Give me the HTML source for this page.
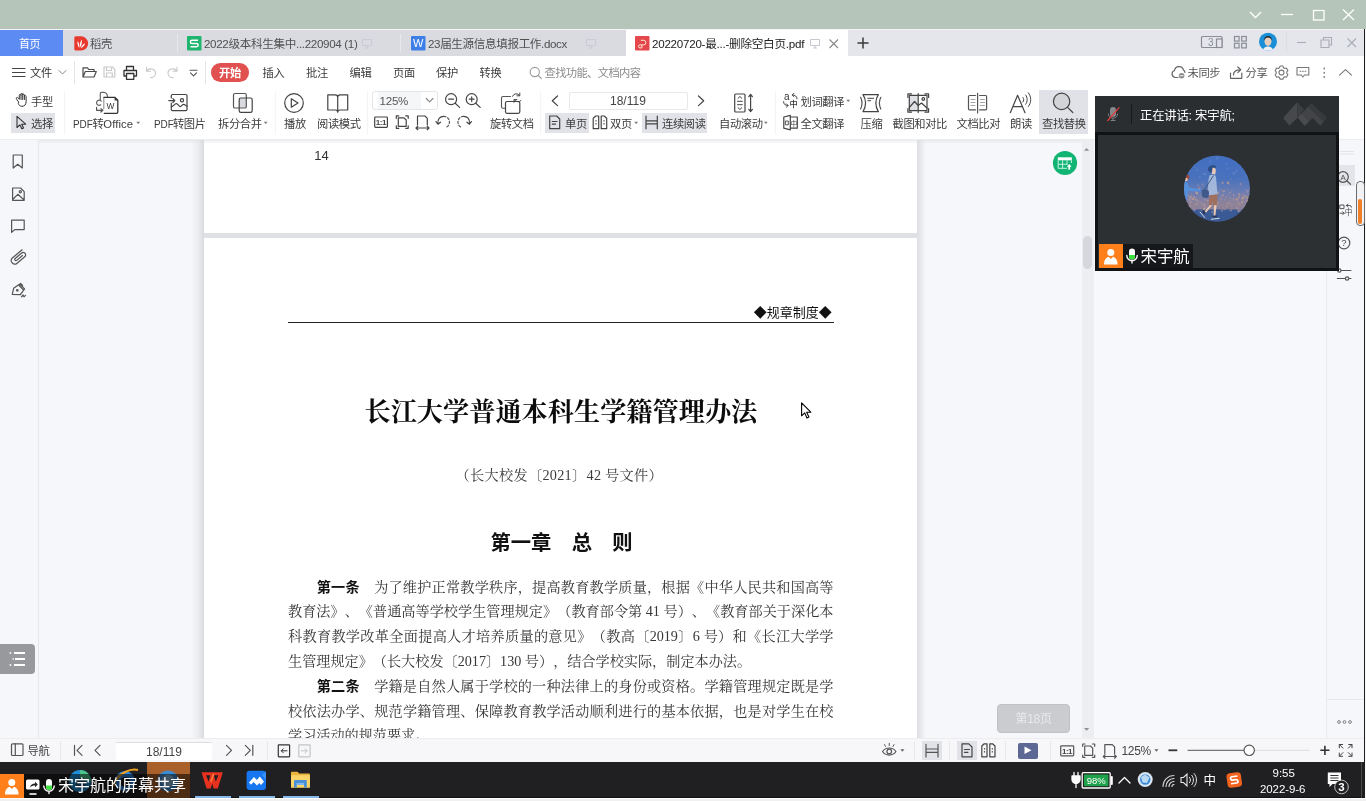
<!DOCTYPE html>
<html lang="zh-CN">
<head>
<meta charset="utf-8">
<title>20220720-最...-删除空白页.pdf</title>
<style>
*{box-sizing:border-box;margin:0;padding:0}
html,body{width:1366px;height:801px;overflow:hidden;background:#f0f0f0}
body{position:relative;font-family:"Liberation Sans","Noto Sans CJK SC",sans-serif;font-size:12px;color:#333;line-height:1}
.abs{position:absolute}
.t{position:absolute;white-space:nowrap;font-size:11.300px;line-height:14px;color:#3c3c3c;letter-spacing:-0.400px}
.t i{font-style:normal;display:inline-block;transform:scaleX(0.880);transform-origin:0 50%;margin-right:-2.900px;letter-spacing:-0.100px}
svg{position:absolute;overflow:visible}
.ic{fill:none;stroke:#555;stroke-width:1.2;stroke-linecap:round;stroke-linejoin:round}

/* ---------- frame ---------- */
#title{left:0;top:0;width:1366px;height:29px;background:#b5c5b9}
#tabs{left:0;top:29px;width:1366px;height:27px;background:#e4e6eb;border-top:1px solid #f3f4f6}
#menu{left:0;top:56px;width:1366px;height:32px;background:#fff}
#tool{left:0;top:88px;width:1366px;height:52px;background:#fff;border-bottom:1px solid #ebecef}
#content{left:0;top:140px;width:1366px;height:597.500px;background:#f6f7fa;overflow:hidden}
#status{left:0;top:737.500px;width:1366px;height:24.500px;background:#f7f7f9;border-top:1px solid #ededf0}
#task{left:0;top:762px;width:1366px;height:36px;background:#202022;border-bottom:1px solid #121213}
#foot{left:0;top:798px;width:1366px;height:3px;background:#f0f0f0;border-top:1px solid #fff}

#tabs,#menu,#tool,#content,#status,#task,#video{filter:blur(0.350px)}
/* ---------- content ---------- */
#side{left:0;top:0;width:39px;height:598px;background:#f6f7fa;border-right:1.500px solid #e6e7eb}
.page{position:absolute;left:204px;width:713px;background:#fff}
.shl{position:absolute;left:191px;width:13px;background:linear-gradient(to right,rgba(216,217,222,0),rgba(216,217,222,0.350) 55%,#d9dade)}
.shr{position:absolute;left:917px;width:9px;background:linear-gradient(to left,rgba(220,221,226,0),#dddee2)}
.doc{position:absolute;white-space:nowrap;text-spacing-trim:space-all;color:#2b2b2b;font-family:"Liberation Serif","Noto Serif CJK SC",serif}
.bl{text-spacing-trim:space-all;position:absolute;left:288px;width:545.500px;height:25px;line-height:25px;font-size:14.150px;white-space:nowrap;color:#363636;font-family:"Liberation Serif","Noto Serif CJK SC",serif;text-align:justify;text-align-last:justify}
.bl b{font-family:"Liberation Sans","Noto Sans CJK SC",sans-serif;font-weight:700;color:#111}
</style>
</head>
<body>

<div id="title" class="abs">
<svg width="1366" height="29" viewBox="0 0 1366 29" style="left:0;top:0">
<g fill="none" stroke="#fff" stroke-width="1.3">
<path d="M1250 12 L1255.5 17.5 L1261 12"/>
<path d="M1281 14.5 H1293"/>
<rect x="1313.5" y="10.5" width="10.5" height="9.5"/>
<path d="M1343 9.5 L1354 20 M1354 9.5 L1343 20"/>
</g>
</svg>
</div>
<div id="tabs" class="abs">
<div class="abs" style="left:0;top:0;width:848px;height:26px;background:#d9dbe1"></div>
<div class="abs" style="left:0;top:0;width:63px;height:26px;background:#5c8bf3"></div>
<div class="t" style="left:19px;top:6.800px;color:#fff;font-size:11px">首页</div>
<div class="abs" style="left:626px;top:0;width:222px;height:27px;background:#fff"></div>
<div class="abs" style="left:177px;top:4px;width:1px;height:18px;background:#e6e8ec"></div>
<div class="abs" style="left:400px;top:4px;width:1px;height:18px;background:#e6e8ec"></div>
<!-- docer icon -->
<svg width="14" height="15" viewBox="0 0 14 15" style="left:74px;top:6px">
<path d="M1.8 0.3 H7 A7 7 0 0 1 7 14.6 H1.8 A1.5 1.5 0 0 1 0.3 13.1 V1.8 A1.5 1.5 0 0 1 1.8 0.3Z" fill="#e8392f"/>
<path d="M5.300 12 C3.600 9.800 3.200 7.300 3.600 5 C5 6.800 5.700 9.300 5.300 12Z M6 11.600 C5.700 8.300 6.300 5.800 7.600 3.600 C8.300 6.300 7.800 9.300 6 11.600Z M6.800 12.200 C7.600 9.800 9 8.300 11 7.300 C10.600 9.600 9.200 11.300 6.800 12.200Z" fill="#fff"/>
</svg>
<div class="t" style="left:90px;top:6.800px;color:#505050">稻壳</div>
<!-- S icon -->
<svg width="15" height="15" viewBox="0 0 15 15" style="left:186.5px;top:6px">
<rect x="0" y="0" width="14.5" height="14.5" rx="1" fill="#1fb56f"/>
<path d="M11 4.3 H5 A1.6 1.6 0 0 0 5 7.5 H9.6 A1.6 1.6 0 0 1 9.6 10.7 H3.5" fill="none" stroke="#fff" stroke-width="1.4"/>
</svg>
<div class="t" style="left:204px;top:6.800px;color:#505050;font-size:11.600px;letter-spacing:-0.330px">2022级本科生集中...220904 (1)</div>
<svg width="10" height="10" viewBox="0 0 10 10" style="left:362px;top:9px"><path d="M0.5 0.5 H9.5 V6.5 H0.5Z M3 9 H7 M5 6.5 V9" fill="none" stroke="#c9ccd3" stroke-width="1"/></svg>
<!-- W icon -->
<svg width="15" height="15" viewBox="0 0 15 15" style="left:410.5px;top:6px">
<rect x="0" y="0" width="14.5" height="14.5" rx="1" fill="#3d7fe6"/>
<text x="7.250" y="11.300" font-size="11" font-weight="400" text-anchor="middle" fill="#fff" font-family="Liberation Sans, sans-serif">W</text>
</svg>
<div class="t" style="left:428px;top:6.800px;color:#505050;font-size:11.600px;letter-spacing:-0.380px">23届生源信息填报工作.docx</div>
<svg width="10" height="10" viewBox="0 0 10 10" style="left:586px;top:9px"><path d="M0.5 0.5 H9.5 V6.5 H0.5Z M3 9 H7 M5 6.5 V9" fill="none" stroke="#c9ccd3" stroke-width="1"/></svg>
<!-- P icon -->
<svg width="15" height="15" viewBox="0 0 15 15" style="left:634.5px;top:6px">
<rect x="0" y="0" width="14.5" height="14.5" rx="1" fill="#e4474c"/>
<path d="M5.800 4.300 H8.600 A2.300 2.300 0 0 1 8.600 8.900 H5 A1.500 1.500 0 0 0 5 11.900 H6.900 V8.900" fill="none" stroke="#ffe9d0" stroke-width="1"/>
</svg>
<div class="t" style="left:652px;top:6.800px;color:#222;font-size:11.6px;letter-spacing:-0.25px">20220720-最...-删除空白页.pdf</div>
<svg width="10" height="10" viewBox="0 0 10 10" style="left:810px;top:9px"><path d="M0.5 0.5 H9.5 V6.5 H0.5Z M3 9 H7 M5 6.5 V9" fill="none" stroke="#c4c7ce" stroke-width="1"/></svg>
<svg width="10" height="10" viewBox="0 0 10 10" style="left:829px;top:9px"><path d="M0.5 0.5 L9 9 M9 0.5 L0.5 9" fill="none" stroke="#888" stroke-width="1.1"/></svg>
<svg width="12" height="12" viewBox="0 0 12 12" style="left:857px;top:7px"><path d="M6 0.5 V11.5 M0.5 6 H11.5" fill="none" stroke="#3a3a3a" stroke-width="1.5"/></svg>
<!-- right icons -->
<svg width="170" height="27" viewBox="1196 29 170 27" style="left:1196px;top:-1px">
<g fill="none" stroke="#8a8d94" stroke-width="1.2">
<rect x="1201.5" y="36.5" width="20.5" height="11" rx="1"/>
<rect x="1216.5" y="39" width="5.5" height="8.5" fill="#e5e7ec"/>
<rect x="1234.5" y="36.500" width="4.6" height="4.6"/><rect x="1241.700" y="36.500" width="4.6" height="4.6"/>
<rect x="1234.5" y="43.300" width="4.6" height="4.6"/><rect x="1241.700" y="43.300" width="4.6" height="4.6"/>
</g>
<text x="1208" y="46" font-size="10" fill="#8a8d94" font-family="Liberation Sans, sans-serif">3</text>
<defs><clipPath id="uav"><circle cx="1268" cy="41.700" r="9"/></clipPath></defs>
<circle cx="1268" cy="41.700" r="9" fill="#1a8fd8"/>
<g clip-path="url(#uav)">
<path d="M1262.500 52 C1263 47.500 1265.500 46.500 1268 46.500 C1270.500 46.500 1273 47.500 1273.500 52 Z" fill="#eef0f3"/>
<ellipse cx="1268" cy="41.300" rx="3.500" ry="4.700" fill="#e6cdbd"/>
<path d="M1264.200 40.500 C1263.300 34.500 1272.700 34.500 1271.800 40.500 C1271 38.300 1269.500 37.600 1268 37.600 C1266.500 37.600 1265 38.300 1264.200 40.500 Z" fill="#26282c"/>
</g>
<path d="M1286.500 32 V52" stroke="#dcdee3" stroke-width="1"/>
<g fill="none" stroke="#a9acb3" stroke-width="1.1">
<path d="M1297 42.500 H1306"/>
<path d="M1321 40 H1329 V47.500 H1321Z M1323.500 40 V37.500 H1331.500 V45 H1329"/>
<path d="M1347.500 38.500 L1356 47 M1356 38.500 L1347.500 47"/>
</g>
</svg>
</div>
<div id="menu" class="abs">
<svg width="1366" height="32" viewBox="0 56 1366 32" style="left:0;top:0">
<g class="ic" stroke="#555" stroke-width="1.2">
<path d="M12.500 68.500 H25 M12.500 72.500 H25 M12.500 76.500 H25" stroke="#444"/>
<path d="M59 70.500 L62.500 74 L66 70.500" stroke="#888" stroke-width="1"/>
<path d="M74.500 61.500 V84" stroke="#e4e5e8" stroke-width="1"/>
<!-- folder -->
<path d="M83 77 V67.800 H87.500 L88.800 69.500 H94 V71.500 M83 77 L85.300 71.500 H96.300 L94 77 Z" stroke="#4a4a4a"/>
<!-- save -->
<path d="M104 67 H112.500 L114.800 69.300 V77 H104 Z M106.500 67 V70.500 H111.500 V67 M106.500 77 V73 H112.300 V77" stroke="#c9cacc"/>
<!-- print -->
<path d="M126.500 70.500 V66.500 H133.500 V70.500 M126.500 76 H124 V70.500 H136.500 V76 H133.800 M126.500 73.500 H133.800 V79.300 H126.500 Z" stroke="#333" stroke-width="1.300"/>
<!-- undo -->
<path d="M146.500 67.300 V71.300 H150.500 M146.800 71 C149 67.500 155.500 68.500 155.500 73 C155.500 76 153 77.800 150.300 77.800" stroke="#c6c7ca" stroke-width="1.100"/>
<!-- redo -->
<path d="M177 67.300 V71.300 H173 M176.700 71 C174.500 67.500 168 68.500 168 73 C168 76 170.500 77.800 173.200 77.800" stroke="#c6c7ca" stroke-width="1.100"/>
<!-- more -->
<path d="M190 70.200 H197 M190.500 72.800 L193.500 75.800 L196.500 72.800" stroke="#555" stroke-width="1.1"/>
<path d="M205.500 61.500 V84" stroke="#e4e5e8" stroke-width="1"/>
<!-- search -->
<circle cx="534.800" cy="72" r="4.600" stroke="#9a9a9a" stroke-width="1.100"/><path d="M538.200 75.500 L541.500 78.600" stroke="#9a9a9a" stroke-width="1.100"/>
<!-- cloud -->
<path d="M1178 77.500 H1175.500 A3.600 3.600 0 0 1 1174.500 70.500 A4.600 4.600 0 0 1 1183.500 70 A3.400 3.400 0 0 1 1185 72.500" stroke="#666"/>
<circle cx="1181.600" cy="75.700" r="2.800" fill="#8c8c8c" stroke="none"/>
<path d="M1180.200 75.700 H1183" stroke="#fff" stroke-width="0.900"/>
<!-- share -->
<path d="M1230.500 73 V78.300 H1241.800 V73 M1233.500 75 C1233.500 71.500 1236 69.800 1240 69.800 M1237.800 67 L1240.800 69.800 L1237.800 72.600" stroke="#666"/>
<!-- gear -->
<path d="M1279.99 66.07 L1283.01 66.07 L1283.49 67.69 L1284.76 68.42 L1286.40 68.03 L1287.91 70.64 L1286.75 71.86 L1286.75 73.34 L1287.91 74.56 L1286.40 77.17 L1284.76 76.78 L1283.49 77.51 L1283.01 79.13 L1279.99 79.13 L1279.51 77.51 L1278.24 76.78 L1276.60 77.17 L1275.09 74.56 L1276.25 73.34 L1276.25 71.86 L1275.09 70.64 L1276.60 68.03 L1278.24 68.42 L1279.51 67.69 Z" stroke="#777" stroke-width="1.100"/>
<circle cx="1281.500" cy="72.600" r="2.500" stroke="#777" stroke-width="1.100"/>
<!-- chat -->
<path d="M1297 67.500 H1308.800 V75 H1304.500 L1302.900 77 L1301.300 75 H1297 Z" stroke="#777" stroke-width="1.100"/>
<path d="M1300 71.300 h0.800 M1302.500 71.300 h0.800 M1305 71.300 h0.800" stroke="#777" stroke-width="1.100"/>
<!-- dots -->
<path d="M1324.200 68.200 v0.600 M1324.200 72.400 v0.600 M1324.200 76.600 v0.600" stroke="#666" stroke-width="1.400"/>
<!-- chevron up -->
<path d="M1339.500 75.200 L1345.500 69.600 L1351.500 75.200" stroke="#777" stroke-width="1.100"/>
</g>
</svg>
<div class="t" style="left:30px;top:9.5px;color:#333">文件</div>
<div class="abs" style="left:211px;top:7px;width:38px;height:18.500px;border-radius:9.250px;background:#e0514f"></div>
<div class="t" style="left:219px;top:9.500px;color:#fff;font-weight:700">开始</div>
<div class="t" style="left:262.500px;top:9.500px">插入</div>
<div class="t" style="left:306px;top:9.500px">批注</div>
<div class="t" style="left:349.500px;top:9.500px">编辑</div>
<div class="t" style="left:393px;top:9.500px">页面</div>
<div class="t" style="left:436px;top:9.500px">保护</div>
<div class="t" style="left:479.500px;top:9.500px">转换</div>
<div class="t" style="left:544.500px;top:9.500px;color:#8b8b8b;letter-spacing:-0.650px">查找功能、文档内容</div>
<div class="t" style="left:1187.500px;top:9.500px;color:#555">未同步</div>
<div class="t" style="left:1245.500px;top:9.500px;color:#555">分享</div>
</div>
<div id="tool" class="abs">
<div class="abs" style="left:11px;top:24.500px;width:44px;height:20px;background:#e1e3e8"></div>
<div class="abs" style="left:545px;top:24.500px;width:44px;height:20px;background:#e1e3e8"></div>
<div class="abs" style="left:642px;top:24.500px;width:65px;height:20px;background:#e1e3e8"></div>
<div class="abs" style="left:1039px;top:2px;width:49px;height:44px;background:#e0e2e7"></div>
<div class="abs" style="left:372px;top:2.500px;width:65.500px;height:19px;border:1px solid #e3e5ea;border-radius:3px;background:#fff"></div>
<div class="abs" style="left:378px;top:3.500px;width:43px;height:17px;background:#f5f6f8"></div>
<div class="abs" style="left:568.500px;top:3.500px;width:119px;height:18.500px;border:1px solid #e6e8ec;border-radius:2px;background:#fff"></div>
<svg width="1366" height="52" viewBox="0 88 1366 52" style="left:0;top:0">
<g class="ic" stroke="#555" stroke-width="1.100">
<!-- hand -->
<path d="M18.500 101.800 L16.600 99.200 C15.600 97.800 17.300 96.700 18.300 98 L19.300 99.300 V95.300 C19.300 94 21 94 21 95.300 V94.300 C21 93 22.700 93 22.700 94.300 V95 C22.700 93.800 24.400 93.800 24.400 95.100 V96.300 C24.400 95.200 26.100 95.200 26.100 96.500 V101.800 C26.100 104.800 24.300 106.300 22 106.300 C20 106.300 19.200 105.300 18.500 104 Z M21 95.300 V99.500 M22.700 95 V99.500 M24.400 96.300 V99.500" stroke="#333" stroke-width="1"/>
<!-- cursor -->
<path d="M17 116.300 V127.500 L19.900 124.800 L21.800 128.800 L23.600 128 L21.700 124.200 H25.700 Z" stroke="#333" stroke-width="1.100"/>
<path d="M64.500 92 V134" stroke="#f3f4f6"/>
<!-- pdf to office -->
<path d="M100.300 100.300 V93.400 Q100.300 92.300 101.400 92.300 H103.800 Q107.300 92.600 107.500 96.800" stroke="#666"/>
<path d="M103.800 97.300 V108.800" stroke="#999"/>
<path d="M104 97.300 H114.800 L117.800 100.300 V112 Q117.800 113.300 116.500 113.300 H104.300" stroke="#333" stroke-width="1.300"/>
<path d="M114.600 97.300 L117.800 100.500 H114.600 Z" fill="#333" stroke="none"/>
<text x="110.500" y="108.700" font-size="8.400" text-anchor="middle" fill="#333" font-family="Liberation Sans, Noto Sans CJK SC, sans-serif" stroke="none">W</text>
<path d="M101.200 101.200 A2.600 2.600 0 1 0 100.800 104.800" stroke="#666"/>
<path d="M96.600 107.300 V110.300 H102.600 M100.900 108.600 L102.800 110.300 L100.900 112" stroke="#555"/>
<!-- pdf to image -->
<path d="M171.300 98 V95.700 Q171.300 94.500 172.500 94.500 H185.800 Q187 94.500 187 95.700 V109.400 Q187 110.600 185.800 110.600 H172.500 Q171.300 110.600 171.300 109.400 V103.200" stroke="#444"/>
<path d="M168.800 100.600 H174.800 M172.900 98.700 L174.800 100.600 L172.900 102.500" stroke="#444"/>
<circle cx="182" cy="100.200" r="1.600" stroke="#444"/>
<path d="M171.500 106.800 C173.500 106.500 174.500 103.600 176.300 103.600 C178 103.600 178.800 106.600 180.300 106.600 C181.600 106.600 182.300 104.300 183.600 104.300 C185 104.300 185.800 105.800 187 106.300" stroke="#444"/>
<!-- split/merge -->
<rect x="239.500" y="98.300" width="6.500" height="9.300" fill="#d9dadf" stroke="none"/>
<rect x="233.500" y="93.500" width="12.800" height="14.500" rx="1.600" stroke="#555"/>
<rect x="239.200" y="98" width="13" height="14.300" rx="1.600" stroke="#444"/>
<path d="M275.500 92 V134" stroke="#f3f4f6"/>
<!-- play -->
<circle cx="294" cy="103" r="9.300" stroke="#444" stroke-width="1.200"/>
<path d="M291.300 98.800 L298 103 L291.300 107.200 Z" stroke="#444"/>
<!-- read mode -->
<path d="M337.700 97.300 Q337.700 94.800 335.200 94.800 H327.800 V110 H335.500 Q337.700 110 337.700 112.200 Q337.700 110 339.900 110 H347.700 V94.800 H340.200 Q337.700 94.800 337.700 97.300 V112" stroke="#444" stroke-width="1.200"/>
<path d="M367.500 92 V134" stroke="#f3f4f6"/>
<!-- chevron zoom -->
<path d="M426.300 98.500 L429.600 101.800 L432.900 98.500" stroke="#888"/>
<!-- zoom out/in -->
<circle cx="451.100" cy="99.200" r="5.500" stroke="#444" stroke-width="1.200"/><path d="M455.200 103.300 L459.600 107.400 M448.700 99.200 H453.500" stroke="#444" stroke-width="1.200"/>
<circle cx="471.700" cy="99.200" r="5.500" stroke="#444" stroke-width="1.200"/><path d="M475.800 103.300 L480.200 107.400 M469.300 99.200 H474.100 M471.700 96.800 V101.600" stroke="#444" stroke-width="1.200"/>
<!-- 1:1 -->
<rect x="374.700" y="117" width="12.700" height="10.300" rx="0.800" stroke="#444"/>
<text x="380.900" y="125.200" font-size="8" font-weight="700" letter-spacing="-0.500" text-anchor="middle" fill="#444" font-family="Liberation Sans, Noto Sans CJK SC, sans-serif" stroke="none">1:1</text>
<!-- fit page -->
<path d="M396.300 118.300 V115.800 H398.800 M405.700 115.800 H408.200 V118.300 M408.200 125.800 V128.300 H405.700 M398.800 128.300 H396.300 V125.800" stroke="#444"/>
<path d="M398.300 117.800 H404 L406.200 120 V126.300 H398.300 Z" stroke="#444"/>
<!-- fit width -->
<path d="M417.500 125 V116 H425 L427.300 118.300 V125" stroke="#444"/>
<path d="M416 128 H429 M417.800 126.300 L416 128 L417.800 129.700 M427.200 126.300 L429 128 L427.200 129.700" stroke="#444"/>
<!-- rotate ccw -->
<path d="M438 123.500 C437.500 119 440 116.300 443.800 116.300" stroke="#444"/>
<path d="M443.800 116.300 A5.800 5.800 0 0 1 445.500 127.600" stroke="#555" stroke-dasharray="2.200 1.800"/>
<path d="M436 121.600 L438 124.200 L440.500 122.200" stroke="#444"/>
<!-- rotate cw -->
<path d="M469.400 123.500 C469.900 119 467.400 116.300 463.600 116.300" stroke="#444"/>
<path d="M463.600 116.300 A5.800 5.800 0 0 0 461.900 127.600" stroke="#555" stroke-dasharray="2.200 1.800"/>
<path d="M471.400 121.600 L469.400 124.200 L466.900 122.200" stroke="#444"/>
<!-- rotate doc -->
<path d="M505.500 108.300 H503 A1.500 1.500 0 0 1 501.500 106.800 V98 A1.500 1.500 0 0 1 503 96.500 H510.500" stroke="#555" stroke-width="1.100"/>
<rect x="505.500" y="101.500" width="14.300" height="11.800" rx="1.500" stroke="#444" stroke-width="1.200"/>
<path d="M512.500 96.300 A4 4 0 0 1 519.500 95.500 M519.800 93 V95.800 H517 M521 100.500 A4 4 0 0 1 514.500 100 M514 102.300 V99.600 H516.800" stroke="#444" stroke-width="1"/>
<path d="M540.500 92 V134" stroke="#f3f4f6"/>
<!-- prev / next -->
<path d="M557.500 96 L552.300 100.800 L557.500 105.600" stroke="#444" stroke-width="1.200"/>
<path d="M698.500 96 L703.700 100.800 L698.500 105.600" stroke="#444" stroke-width="1.200"/>
<!-- single page -->
<path d="M549.700 116 H556.700 L559.700 119 V128.700 H549.700 Z M552.300 121.500 H557 M552.300 124.200 H555.500" stroke="#444"/>
<!-- double page -->
<path d="M593.200 118.200 L595.700 116 H598.700 V128.700 H593.200 Z M601.200 116 H604.200 L606.700 118.200 V128.700 H601.200 Z M596 120.500 v0.400 M596 123.500 v0.400 M604 120.500 v0.400 M604 123.500 v0.400" stroke="#444"/>
<!-- continuous -->
<path d="M646 116 V128.800 M657.300 116 V128.800 M646 120.800 H657.300 M646 123.800 H657.300" stroke="#444" stroke-width="1.200"/>
<!-- auto scroll -->
<rect x="734.700" y="94" width="10.300" height="18" rx="1" stroke="#444"/>
<path d="M738 98.300 L739.900 96.500 L741.800 98.300 M738 107.700 L739.900 109.500 L741.800 107.700 M737.500 101.300 H742.300 M737.500 104.700 H742.300" stroke="#444" stroke-width="1"/>
<path d="M750.600 94.600 V111.400 M748.800 96.600 L750.600 94.400 L752.400 96.600 M748.800 109.400 L750.600 111.600 L752.400 109.400" stroke="#444"/>
<path d="M775.500 92 V134" stroke="#f3f4f6"/>
<!-- word translate -->
<text x="786.700" y="99.800" font-size="10" text-anchor="middle" fill="#333" font-family="Liberation Sans, Noto Sans CJK SC, sans-serif" stroke="none">a</text>
<path d="M797 98.800 C797 96.300 795.300 95 792.300 95 M793.900 93.300 L792.200 95 L793.900 96.700" stroke="#444" stroke-width="1"/>
<path d="M783.600 101.600 C783.600 104.300 785 105.500 788 105.500 M786.400 103.800 L788.100 105.500 L786.400 107.200" stroke="#444" stroke-width="1"/>
<text x="793.500" y="107.300" font-size="8.200" font-weight="500" text-anchor="middle" fill="#333" font-family="Liberation Sans, Noto Sans CJK SC, sans-serif" stroke="none">中</text>
<!-- full translate -->
<path d="M790.300 115.400 L783.800 117 V128.200 L790.300 129.800 Z M790.300 117 H797.300 V128.200 H790.300" stroke="#444"/>
<path d="M785.800 121 H788.300 V124.800 H785.800 Z" stroke="#444" stroke-width="0.900"/>
<text x="793.900" y="125.600" font-size="6.800" text-anchor="middle" fill="#444" font-family="Liberation Sans, Noto Sans CJK SC, sans-serif" stroke="none">中</text>
<!-- compress -->
<path d="M863 94.600 H878.400 C875 99.500 875 106.700 878.400 111.700 H863 C866.400 106.700 866.400 99.500 863 94.600 Z" stroke="#444" stroke-width="1.200"/>
<path d="M867.800 98.300 H873.600 M867.800 100.700 H870.600" stroke="#444" stroke-width="1"/>
<path d="M860.600 97.300 C862.400 101 862.400 105.300 860.600 109 M880.800 97.300 C879 101 879 105.300 880.800 109" stroke="#555"/>
<!-- screenshot compare -->
<rect x="909.300" y="95.300" width="8.900" height="15.400" fill="#dfe0e4" stroke="none"/>
<path d="M907.900 97.500 V93.900 H911.500 M925 93.900 H928.600 V97.500 M928.600 108.600 V112.200 H925 M911.500 112.200 H907.900 V108.600" stroke="#444" stroke-width="1.200"/>
<path d="M909.300 95.300 H927 V110.700 H909.300 Z M918.200 93.500 V112.600" stroke="#444"/>
<path d="M909.300 107.500 L914.500 101.500 L918.200 105.500 L921.500 103 L927 108" stroke="#444"/>
<circle cx="923.300" cy="99" r="1.300" stroke="#444"/>
<!-- doc compare -->
<path d="M977.600 93.300 V113 M975.600 95.500 H969.500 A1 1 0 0 0 968.500 96.500 V108.800 A1 1 0 0 0 969.500 109.800 H975.600 M979.600 95.500 H985.600 A1 1 0 0 1 986.600 96.500 V108.800 A1 1 0 0 1 985.600 109.800 H979.600" stroke="#555"/>
<path d="M971 99.500 H975 M971 102.500 H975 M971 105.500 H975 M980.500 99.500 H984.500 M980.500 102.500 H984.500 M980.500 105.500 H984.500" stroke="#999" stroke-width="0.900"/>
<!-- read aloud -->
<path d="M1010.300 112.700 L1017.600 95.300 L1025 112.700 M1012.800 106.600 H1022.400" stroke="#444" stroke-width="1.200"/>
<path d="M1023 97.500 C1024 98.800 1024 100.500 1023 102 M1025.700 95 C1027.700 97.500 1027.700 101.800 1025.700 104.300 M1028.400 92.800 C1031.500 96.500 1031.500 102.800 1028.400 106.500" stroke="#444" stroke-width="1"/>
<!-- find replace -->
<circle cx="1061.600" cy="101.400" r="8.200" stroke="#444" stroke-width="1.200" fill="#d3d4d8"/>
<path d="M1067.600 107.400 L1072.800 112.500" stroke="#444" stroke-width="1.200"/>
</g>
<g fill="#777">
<path d="M136.300 121.800 h3.800 l-1.900 2.300z M263.800 121.800 h3.800 l-1.900 2.300z M634.300 121.800 h3.800 l-1.900 2.300z M764 121.800 h3.800 l-1.900 2.300z M846.300 99.800 h3.800 l-1.900 2.300z"/>
</g>
</svg>
<div class="t" style="left:31px;top:6.500px">手型</div>
<div class="t" style="left:31px;top:28.500px">选择</div>
<div class="t" style="left:73px;top:29px"><i>PDF</i>转<span style="letter-spacing:0.100px">Office</span></div>
<div class="t" style="left:153.500px;top:29px"><i>PDF</i>转图片</div>
<div class="t" style="left:218px;top:29px">拆分合并</div>
<div class="t" style="left:284px;top:29px">播放</div>
<div class="t" style="left:317px;top:29px">阅读模式</div>
<div class="t" style="left:379.500px;top:5.500px;font-size:11.500px;color:#555;letter-spacing:-0.200px">125%</div>
<div class="t" style="left:490px;top:29px">旋转文档</div>
<div class="t" style="left:610px;top:6px;font-size:12px;color:#444;letter-spacing:0">18/119</div>
<div class="t" style="left:565px;top:28.500px">单页</div>
<div class="t" style="left:610px;top:28.500px">双页</div>
<div class="t" style="left:662px;top:28.500px">连续阅读</div>
<div class="t" style="left:719px;top:29px">自动滚动</div>
<div class="t" style="left:800.500px;top:6.500px">划词翻译</div>
<div class="t" style="left:800.500px;top:28.500px">全文翻译</div>
<div class="t" style="left:860.500px;top:29px">压缩</div>
<div class="t" style="left:892.500px;top:29px">截图和对比</div>
<div class="t" style="left:956.500px;top:29px">文档比对</div>
<div class="t" style="left:1010px;top:29px">朗读</div>
<div class="t" style="left:1042px;top:29px">查找替换</div>
</div>
<div id="content" class="abs">
<div class="abs" style="left:0;top:0;width:1366px;height:4px;background:linear-gradient(to bottom,#e9eaed,rgba(246,247,250,0))"></div>
<div id="side" class="abs"></div>
<svg width="40" height="160" viewBox="0 145 40 160" style="left:0;top:5px">
<g class="ic" stroke="#444" stroke-width="1.200">
<path d="M13.200 155 H22.300 V168 L17.750 164.300 L13.200 168 Z"/>
<path d="M12.600 188 H20.500 L24.200 191.700 V200.300 H12.600 Z M12.600 199.500 L17.800 194.300 L24.200 200"/>
<circle cx="20.300" cy="191.800" r="1.100"/>
<path d="M11.600 220.200 H24.200 V229.600 H14.800 L11.600 232.300 Z"/>
<g transform="translate(18.300 257.600) rotate(-40) translate(-8.500 -4)"><path d="M16.500 0.500 H4 A3.500 3.500 0 0 0 4 7.500 H14 A2.400 2.400 0 0 0 14 2.700 H5.500 A1.200 1.200 0 0 0 5.500 5.100 H13"/></g>
<path d="M12.300 294.500 L13.600 288.300 L19.800 284 L24.600 288.800 L20.300 294.600 L12.300 294.500 M18.600 285 L23.600 290 M20.600 283.300 L22.600 285.300"/>
<circle cx="17.300" cy="290.300" r="0.800"/>
<path d="M21.500 296.800 L23 295 L24 296.800 L25.500 295.300"/>
</g>
</svg>
<!-- pages -->
<div class="shl" style="top:0;height:598px"></div>
<div class="shr" style="top:0;height:598px"></div>
<div class="abs" style="left:204px;top:92px;width:713px;height:7px;background:#dfe0e3"></div>
<div class="page" style="top:0;height:92.600px"></div>
<div class="page" style="top:98px;height:500px"></div>
<div class="abs" style="left:204px;top:0;width:713px;height:4px;background:linear-gradient(to bottom,#ebecee,rgba(255,255,255,0))"></div>
<div class="doc" style="left:314.300px;top:7.700px;font-size:13px;line-height:16px;font-family:'Liberation Sans',sans-serif;color:#333">14</div>
<div class="doc" style="left:753.700px;top:163.200px;font-size:13px;line-height:18px;font-family:'Liberation Sans','Noto Sans CJK SC',sans-serif;color:#111"><span style="font-family:'Noto Sans CJK SC',sans-serif">◆</span>规章制度<span style="font-family:'Noto Sans CJK SC',sans-serif">◆</span></div>
<div class="abs" style="left:288px;top:181.700px;width:546px;height:1.200px;background:#222"></div>
<div class="doc" style="left:364.500px;top:254.600px;font-size:26.200px;line-height:36px;font-weight:700;color:#0c0c0c">长江大学普通本科生学籍管理办法</div>
<div class="doc" style="left:455.500px;top:324.500px;font-size:14.200px;letter-spacing:0.300px;line-height:20px;color:#3a3a3a">（长大校发〔2021〕42 号文件）</div>
<div class="doc" style="left:490.500px;top:387.700px;font-size:20.300px;line-height:30px;font-weight:700;font-family:'Liberation Sans','Noto Sans CJK SC',sans-serif;color:#111">第一章　总　则</div>
<div class="bl" style="top:434.500px;left:316.700px;width:516.800px"><b>第一条</b>　为了维护正常教学秩序，提高教育教学质量，根据《中华人民共和国高等</div>
<div class="bl" style="top:459.300px">教育法》、《普通高等学校学生管理规定》（教育部令第 41 号）、《教育部关于深化本</div>
<div class="bl" style="top:484.100px">科教育教学改革全面提高人才培养质量的意见》（教高〔2019〕6 号）和《长江大学学</div>
<div class="bl" style="top:508.900px;text-align-last:left">生管理规定》（长大校发〔2017〕130 号），结合学校实际，制定本办法。</div>
<div class="bl" style="top:533.700px;left:316.700px;width:516.800px"><b>第二条</b>　学籍是自然人属于学校的一种法律上的身份或资格。学籍管理规定既是学</div>
<div class="bl" style="top:558.500px">校依法办学、规范学籍管理、保障教育教学活动顺利进行的基本依据，也是对学生在校</div>
<div class="bl" style="top:583.300px;text-align-last:left">学习活动的规范要求。</div>
<!-- mouse cursor -->
<svg width="12" height="18" viewBox="0 0 12 18" style="left:801px;top:261.500px"><path d="M0.600 0.800 V13.800 L3.700 10.900 L5.900 16 L7.900 15.100 L5.700 10.200 H9.800 Z" fill="#fff" stroke="#000" stroke-width="1.100" stroke-linejoin="round"/></svg>
<!-- scrollbar -->
<div class="abs" style="left:1081.500px;top:0;width:12.500px;height:598px;background:#edeef2"></div>
<div class="abs" style="left:1082.500px;top:96px;width:9px;height:33px;border-radius:4.500px;background:#d5d7dc"></div>
<svg width="6" height="4" viewBox="0 0 6 4" style="left:1084px;top:8.200px"><path d="M0 2.800 L2.600 0 L5.200 2.800Z" fill="#8e9096"/></svg>
<svg width="6" height="4" viewBox="0 0 6 4" style="left:1084px;top:587.800px"><path d="M0 0 L2.600 2.800 L5.200 0Z" fill="#8e9096"/></svg>
<!-- right panel -->
<div class="abs" style="left:1094px;top:0;width:232px;height:598px;background:#f7f8fb"></div>
<div class="abs" style="left:1326px;top:0;width:38px;height:598px;background:#f6f7fa;border-left:1px solid #e8e9ed"></div>
<div class="abs" style="left:1339px;top:25px;width:16px;height:21px;background:#e4e5ea"></div>
<svg width="40" height="170" viewBox="1326 140 40 170" style="left:1326px;top:0">
<g class="ic" stroke="#4a4a4a" stroke-width="1.100">
<path d="M1340 151.500 H1353.500 M1340 154 H1353.500" stroke="#dcdde1" stroke-width="0.800"/>
<circle cx="1343" cy="177" r="5.300"/><path d="M1347 181 L1350.500 184.300"/>
<text x="1343" y="179.900" font-size="7.800" text-anchor="middle" fill="#4a4a4a" font-family="Liberation Sans, Noto Sans CJK SC, sans-serif" stroke="none">A</text>
<path d="M1340.200 205 H1344 V208.600 H1340.200 Z M1340 213.200 H1344.200 M1342.800 211.800 L1344.200 213.200 L1342.800 214.600" stroke-width="1"/>
<path d="M1346.400 205.500 H1349.800 A1.600 1.600 0 0 1 1351.400 207.100 M1347.800 204 L1346.400 205.500 L1347.800 207" stroke-width="1"/>
<text x="1348.500" y="215.300" font-size="7.600" text-anchor="middle" fill="#4a4a4a" font-family="Liberation Sans, Noto Sans CJK SC, sans-serif" stroke="none">中</text>
<circle cx="1344" cy="243" r="5.800"/>
<text x="1344" y="246.400" font-size="9.500" text-anchor="middle" fill="#4a4a4a" font-family="Liberation Sans, Noto Sans CJK SC, sans-serif" stroke="none">?</text>
<path d="M1340.500 270.500 H1351 M1337.300 278.500 H1351" stroke-width="1"/>
<circle cx="1339.300" cy="270.500" r="1.700" fill="#f6f7fa"/><circle cx="1347.100" cy="278.500" r="1.700" fill="#f6f7fa"/>
</g>
</svg>
<div class="abs" style="left:1327px;top:559px;width:36px;height:1px;background:#e6e7eb"></div>
<svg width="16" height="4" viewBox="0 0 16 4" style="left:1336.500px;top:579.500px"><g fill="none" stroke="#666" stroke-width="0.800"><circle cx="2" cy="2" r="1.400"/><circle cx="7.500" cy="2" r="1.400"/><circle cx="13" cy="2" r="1.400"/></g></svg>
<!-- green circle -->
<svg width="26" height="26" viewBox="0 0 26 26" style="left:1051.800px;top:9.900px">
<circle cx="13" cy="13" r="12.100" fill="#12b474"/>
<path d="M5.800 7.300 H19.800 V10.300 H5.800 Z" fill="#fff"/>
<path d="M6.200 10.300 V18.300 H15 M6.200 14.300 H15.500 M10.600 10.300 V18.300 M15 10.300 V14.300 M19.400 10.300 V13" fill="none" stroke="#d8f7e9" stroke-width="0.900"/>
<path d="M17.200 19.600 V15.500" fill="none" stroke="#fff" stroke-width="1.800"/>
<path d="M14.800 16.800 L17.200 14.100 L19.600 16.800 Z" fill="#fff"/>
</svg>
<!-- page tip button -->
<div class="abs" style="left:997px;top:564px;width:73px;height:29px;border-radius:4px;background:#cbccd0;border:1px solid #c0c1c5"></div>
<div class="t" style="left:1015.500px;top:571.500px;color:#e8e9ec;font-size:12px;letter-spacing:-0.300px">第18页</div>
<!-- float toc button -->
<div class="abs" style="left:0;top:504px;width:35px;height:30px;border-radius:0 4px 4px 0;background:#98999c"></div>
<svg width="18" height="16" viewBox="0 0 18 16" style="left:8.500px;top:511px"><path d="M5 2 H16 M6 8 H16 M5 14 H16" stroke="#fff" stroke-width="1.800" fill="none"/><path d="M0.500 2 h1.800 M3.500 8 h1.400 M0.500 14 h1.800" stroke="#fff" stroke-width="1.600" fill="none"/></svg>
</div>
<div id="status" class="abs">
<div class="abs" style="left:922px;top:2px;width:19.500px;height:19.500px;background:#e1e3e8"></div>
<div class="abs" style="left:957px;top:2px;width:19.500px;height:19.500px;background:#e1e3e8"></div>
<div class="abs" style="left:115.500px;top:3px;width:96px;height:18px;background:#fff;border-top:1px solid #dcdde0;border-radius:2px"></div>
<div class="abs" style="left:1017.500px;top:4.500px;width:20.500px;height:16px;border-radius:2px;background:#5d6794"></div>
<svg width="1366" height="24" viewBox="0 738 1366 24" style="left:0;top:-0.500px">
<g class="ic" stroke="#444" stroke-width="1.100">
<rect x="11.500" y="743.800" width="11.500" height="11.700" rx="1" stroke="#555"/><path d="M15.300 743.800 V755.500" stroke="#555"/>
<path d="M60.500 742 V759 M267.500 742 V759 M914.500 742 V759 M949.500 742 V759 M1005.500 742 V759 M1050.500 742 V759" stroke="#e6e7ea" stroke-width="1"/>
<path d="M74.500 745.300 V755.300 M82 745.300 L77 750.300 L82 755.300" stroke-width="1.200"/>
<path d="M100 745.300 L95 750.300 L100 755.300" stroke-width="1.200"/>
<path d="M226.500 745.300 L231.500 750.300 L226.500 755.300" stroke-width="1.200"/>
<path d="M252.800 745.300 V755.300 M245.300 745.300 L250.300 750.300 L245.300 755.300" stroke-width="1.200"/>
<rect x="278.300" y="744.800" width="11.300" height="12" rx="0.500" stroke="#333"/><path d="M287 750.800 H281.300 M283.300 748.800 L281.300 750.800 L283.300 752.800" stroke="#333" stroke-width="1"/>
<rect x="298.800" y="744.800" width="11.300" height="12" rx="0.500" stroke="#c4c5c8"/><path d="M301.400 750.800 H307.100 M305.100 748.800 L307.100 750.800 L305.100 752.800" stroke="#c4c5c8" stroke-width="1"/>
<!-- eye -->
<path d="M882.600 751.500 C885.500 746.800 893 746.800 895.900 751.500 C893 756.200 885.500 756.200 882.600 751.500 Z"/><circle cx="889.250" cy="751.500" r="2.300"/>
<path d="M889.250 743.300 V745.500 M884.500 744.600 L885.500 746.400 M894 744.600 L893 746.400" stroke-width="1"/>
<!-- continuous -->
<path d="M926 744.300 V757 M938 744.300 V757 M926 749 H938 M926 752.300 H938" stroke="#555" stroke-width="1.200"/>
<!-- single -->
<path d="M962 743.800 H968.800 L972 747 V756.800 H962 Z M964.500 749.500 H969.500 M964.500 752.300 H968" stroke="#444"/>
<!-- double -->
<path d="M981.800 746 L984.200 743.800 H987 V756.800 H981.800 Z M989.800 743.800 H992.600 L995 746 V756.800 H989.800 Z M984.500 748.500 v0.400 M984.500 751.500 v0.400 M992.300 748.500 v0.400 M992.300 751.500 v0.400" stroke="#444"/>
<!-- 1:1 -->
<rect x="1060.700" y="745.800" width="13" height="10" rx="0.800"/>
<text x="1067" y="753.700" font-size="8" font-weight="700" letter-spacing="-0.500" text-anchor="middle" fill="#444" font-family="Liberation Sans, Noto Sans CJK SC, sans-serif" stroke="none">1:1</text>
<!-- fit page -->
<path d="M1082.700 746.300 V744 H1085 M1092.400 744 H1094.700 V746.300 M1094.700 755 V757.300 H1092.400 M1085 757.300 H1082.700 V755"/>
<path d="M1084.700 746 H1090.500 L1092.700 748.200 V755.300 H1084.700 Z"/>
<!-- fit width -->
<path d="M1104.800 753.500 V744.600 H1112.300 L1114.600 746.900 V753.500"/>
<path d="M1103.300 756.500 H1116.300 M1105.100 754.800 L1103.300 756.500 L1105.100 758.200 M1114.500 754.800 L1116.300 756.500 L1114.500 758.200"/>
<path d="M1168.500 750.300 H1177.300" stroke="#333" stroke-width="1.800" stroke-linecap="butt"/>
<path d="M1188 750.300 H1244" stroke="#555" stroke-width="1"/>
<path d="M1254 750.300 H1309.500" stroke="#dcdcdf" stroke-width="1"/>
<circle cx="1249.200" cy="750.300" r="5.200" fill="#fff" stroke="#555"/>
<path d="M1320.300 750.300 H1329.500 M1324.900 745.700 V754.900" stroke="#333" stroke-width="1.600" stroke-linecap="butt"/>
<path d="M1339.300 747.800 V744.500 H1342.600 M1339.500 744.700 L1343 748.200 M1352 747.800 V744.500 H1348.700 M1351.800 744.700 L1348.300 748.200 M1339.300 753 V756.300 H1342.600 M1339.500 756.100 L1343 752.600 M1352 753 V756.300 H1348.700 M1351.800 756.100 L1348.300 752.600" stroke="#444" stroke-width="1"/>
</g>
<path d="M1024.500 746.500 L1031.500 750.300 L1024.500 754.100 Z" fill="#fff"/>
<path d="M900.300 749.300 h4.200 l-2.100 2.500z M1154.300 749.300 h4.200 l-2.100 2.500z" fill="#666"/>
</svg>
<div class="t" style="left:27.500px;top:5.500px;color:#444">导航</div>
<div class="t" style="left:146px;top:6px;font-size:12px;color:#444;letter-spacing:0">18/119</div>
<div class="t" style="left:1121.500px;top:5.500px;font-size:12px;color:#444;letter-spacing:-0.300px">125%</div>
</div>
<div id="task" class="abs">
<div class="abs" style="left:147px;top:0;width:43px;height:36px;background:#a9602a"></div>
<div class="abs" style="left:194.500px;top:34px;width:36.500px;height:2px;background:#85b9ec"></div>
<div class="abs" style="left:238.500px;top:34px;width:36.500px;height:2px;background:#85b9ec"></div>
<div class="abs" style="left:283px;top:34px;width:36px;height:2px;background:#85b9ec"></div>
<div class="abs" style="left:1360.500px;top:0;width:1px;height:36px;background:#4a4a4a"></div>
<svg width="1366" height="36" viewBox="0 762 1366 36" style="left:0;top:0">
<!-- edge-like -->
<circle cx="80" cy="781" r="11" fill="#1d8fd8"/><path d="M80 770 A11 11 0 0 1 91 781 H80 Z" fill="#4cc38a"/><circle cx="81" cy="783" r="5.500" fill="#1f4f7a"/>
<!-- ie-like -->
<circle cx="125" cy="781" r="10" fill="#2d86d9"/><circle cx="125" cy="782" r="5" fill="#202022"/><path d="M113 786 C118 772 132 768 138 770" fill="none" stroke="#f0a020" stroke-width="2"/>
<!-- active app icon -->
<circle cx="168" cy="781" r="10.500" fill="#3d8bd0"/><circle cx="168" cy="781" r="6.500" fill="#8fb9dc"/>
<!-- wps -->
<path d="M201.500 772.300 H222.800 L217.800 788.400 H213.600 L212.200 783.600 L210.800 788.400 H206.600 Z" fill="#e8321f"/>
<path d="M206 775.300 H210.300 L208.700 781.800 Z M213.800 775.300 H218.300 L215.800 781.800 Z" fill="#202022"/>
<path d="M212.800 773.500 L210.300 781 L211.300 783 L214.500 774 Z" fill="#ff7a3a"/>
<!-- tencent meeting -->
<rect x="246.600" y="770.700" width="19.400" height="19.200" rx="2.800" fill="#1677f0"/>
<path d="M249 782.500 L254 777 L256.800 780 L259.800 776.600 L264 781.800 L261 785 L259.300 783 L257 785.500 L253.600 782 L251 784.800 Z" fill="#fff"/>
<path d="M262 775 L266 771.500 V780 Z" fill="#4a9cf8" opacity="0.700"/>
<!-- folder -->
<path d="M291 772.500 Q291 771.700 291.800 771.700 H297.500 L299.200 773.500 H309 Q309.900 773.500 309.900 774.400 V787.600 H291 Z" fill="#e9b53d"/>
<path d="M291 775.200 H309.900 V787.600 H291 Z" fill="#f9d468"/>
<path d="M294 787.600 V781 Q294 780 295 780 H305.800 Q306.800 780 306.800 781 V787.600 H304 V783 H296.800 V787.600 Z" fill="#4a90d9"/>
<rect x="296.800" y="783" width="7.200" height="2" fill="#7db8ee"/>
<!-- tray -->
<g fill="none" stroke="#fff" stroke-width="1.300" stroke-linecap="round" stroke-linejoin="round">
<path d="M1074 772.500 V776 M1078 772.500 V776" />
<path d="M1072 776 H1080 V779.500 A4 4 0 0 1 1072 779.500 Z M1076 783.500 V787.500" fill="#fff"/>
<rect x="1082.200" y="772.700" width="28" height="15.300" rx="1"/>
<path d="M1111.800 777 V784" stroke-width="2"/>
<path d="M1119 783 L1124.500 777.500 L1130 783"/>
</g>
<rect x="1084" y="774.500" width="24.400" height="11.700" fill="#1fa24b"/>
<text x="1096.200" y="783.800" font-size="9.500" fill="#fff" text-anchor="middle" font-family="Liberation Sans, sans-serif">98%</text>
<circle cx="1145.200" cy="779.500" r="7.500" fill="#d9e6f2"/><circle cx="1145.200" cy="779.500" r="5.200" fill="#3b8ad6"/><path d="M1141 777 L1145 774.500 L1149.500 777.500 L1147 783 L1142.500 782.500 Z" fill="#bcd9f2"/>
<g fill="none" stroke="#e8e8e8" stroke-width="1.100" stroke-linecap="round">
<path d="M1163 786.500 A11 11 0 0 1 1174 775.500" opacity="0.850"/>
<path d="M1166 786.500 A8 8 0 0 1 1174 778.500"/>
<path d="M1169 786.500 A5 5 0 0 1 1174 781.500"/>
<path d="M1172 786.500 A2 2 0 0 1 1174 784.500"/>
<path d="M1181 777.500 H1183.500 L1187 774 V786 L1183.500 782.500 H1181 Z"/>
<path d="M1189.500 777.300 C1190.800 778.800 1190.800 781.200 1189.500 782.700 M1191.800 775.300 C1194 777.800 1194 782.200 1191.800 784.700 M1194.100 773.500 C1197.300 777 1197.300 783 1194.100 786.500" stroke-width="1"/>
</g>
<rect x="1227" y="772.800" width="14.500" height="14.500" rx="3.500" fill="#f2641e" transform="rotate(-8 1234 780)"/>
<path d="M1238 776.500 H1232.500 A1.700 1.700 0 0 0 1232.500 779.900 H1236 A1.700 1.700 0 0 1 1236 783.300 H1230.500" fill="none" stroke="#fff" stroke-width="1.700" transform="rotate(-8 1234 780)"/>
<!-- notification -->
<path d="M1327.800 772.500 H1341 V784 H1332.500 L1329.500 787 V784 H1327.800 Z" fill="#fff"/>
<path d="M1330.300 775.500 H1338.500 M1330.300 778 H1338.500 M1330.300 780.500 H1338.500" stroke="#202022" stroke-width="0.900"/>
<circle cx="1341.500" cy="787" r="6.800" fill="#202022" stroke="#cfcfcf" stroke-width="0.900"/>
<text x="1341.500" y="791.200" font-size="11.500" fill="#fff" text-anchor="middle" font-weight="700" font-family="Liberation Sans, sans-serif">3</text>
</svg>
<div class="t" style="left:1203.500px;top:11.800px;color:#fff;font-size:12.500px">中</div>
<div class="t" style="left:1272.500px;top:3.500px;color:#fff;font-size:11.500px;letter-spacing:0">9:55</div>
<div class="t" style="left:1260px;top:19.500px;color:#fff;font-size:11.500px;letter-spacing:-0.100px">2022-9-6</div>
<!-- share label -->
<div class="abs" style="left:24px;top:12px;width:166px;height:24px;background:rgba(0,0,0,0.550)"></div>
<div class="abs" style="left:0;top:12px;width:24px;height:24px;background:#ff7f1a"></div>
<svg width="190" height="24" viewBox="0 774 190 24" style="left:0;top:12px">
<circle cx="11.800" cy="782.500" r="3.500" fill="#fff"/>
<path d="M5 794.500 C5 788.500 8.500 787 9.800 787 L11.800 789 L13.800 787 C15.100 787 18.600 788.500 18.600 794.500 Z" fill="#fff"/>
<rect x="26" y="779.500" width="13.500" height="10" rx="1.500" fill="#fff"/>
<path d="M29.500 794 H36.500" stroke="#fff" stroke-width="1.600"/>
<path d="M30 787.500 C30.500 784.500 32.500 783.500 35 783.500 V781.800 L37.800 784.500 L35 787.200 V785.500 C33 785.500 31.500 786 30 787.500 Z" fill="#222"/>
<rect x="46" y="779" width="6" height="11" rx="3" fill="#fff"/>
<path d="M46 785.500 H52 V787 A3 3 0 0 1 46 787 Z" fill="#3de23d"/>
<path d="M43.800 786 A5.200 5.200 0 0 0 54.200 786 M49 791.200 V793.500" fill="none" stroke="#fff" stroke-width="1.400" stroke-linecap="round"/>
</svg>
<div class="t" style="left:58px;top:13px;color:#fff;font-size:16px;line-height:22px;letter-spacing:0">宋宇航的屏幕共享</div>
</div>
<div id="foot" class="abs"></div>
<div id="video" class="abs" style="left:1095px;top:96px;width:243.700px;height:174.600px;background:#101214">
<div class="abs" style="left:0;top:0;width:243.700px;height:36px;background:#2b2e31"></div>
<div class="abs" style="left:3px;top:39px;width:238.100px;height:132.800px;background:#2d3033"></div>
<div class="abs" style="left:36px;top:8px;width:1px;height:20px;background:#17191b"></div>
<svg width="245" height="175" viewBox="1095 96 245 175" style="left:0;top:0">
<!-- muted mic -->
<rect x="1110" y="107" width="6" height="10" rx="3" fill="#85878b"/>
<path d="M1108.300 113.500 A4.700 4.700 0 0 0 1117.700 113.500 M1113 118.200 V120.300 M1110.500 120.500 H1115.500" fill="none" stroke="#7d7f82" stroke-width="1"/>
<path d="M1107.300 121 L1119.300 107.300" stroke="#e23b3b" stroke-width="1.200"/>
<!-- logo -->
<path d="M1297.200 102.200 L1284 116.800 Q1283 118 1284 119.200 L1289.500 125.700 L1297.200 118 Z" fill="#46484b"/>
<path d="M1297.200 102.200 L1304 109.500 L1297.200 118 Z" fill="#3c3e41"/>
<path d="M1311.500 103.200 L1297.700 117.500 L1304.600 125.700 L1312.500 118 L1320.200 125.700 L1325.800 119 Q1326.800 117.800 1325.800 116.800 Z" fill="#424447"/>
<path d="M1311.500 103.200 L1325.800 116.800 Q1326.800 117.800 1325.800 119 L1323.500 121.800 L1308 106.800 Z" fill="#38393c"/>
<path d="M1301 114 L1297.700 117.500 L1304.600 125.700 L1309 121.500 Z" fill="#494b4e"/>
<!-- avatar -->
<defs><clipPath id="avc"><circle cx="1217" cy="188.600" r="33"/></clipPath>
<linearGradient id="avg" x1="0" y1="0" x2="0" y2="1"><stop offset="0" stop-color="#426fc2"/><stop offset="0.350" stop-color="#4a72bc"/><stop offset="0.550" stop-color="#6a7db4"/><stop offset="0.720" stop-color="#8f8398"/><stop offset="0.800" stop-color="#8a8096"/><stop offset="0.830" stop-color="#4a64a0"/><stop offset="1" stop-color="#3a5a96"/></linearGradient></defs>
<g clip-path="url(#avc)">
<rect x="1184" y="155" width="67" height="68" fill="url(#avg)"/>
<rect x="1184" y="209.500" width="67" height="14" fill="#3a5a96"/>
<circle cx="1205.7" cy="205.8" r="0.6" fill="#b09aa4" opacity="0.49"/>
<circle cx="1223.0" cy="208.4" r="1.2" fill="#a58e98" opacity="0.46"/>
<circle cx="1213.1" cy="202.2" r="0.8" fill="#9d8fb0" opacity="0.68"/>
<circle cx="1247.5" cy="200.5" r="1.0" fill="#b09aa4" opacity="0.83"/>
<circle cx="1222.7" cy="181.6" r="0.5" fill="#9d8fb0" opacity="0.50"/>
<circle cx="1212.1" cy="212.2" r="0.9" fill="#b09aa4" opacity="0.57"/>
<circle cx="1238.7" cy="203.5" r="1.0" fill="#c4a08c" opacity="0.49"/>
<circle cx="1231.7" cy="208.6" r="1.0" fill="#b09aa4" opacity="0.53"/>
<circle cx="1229.6" cy="192.8" r="1.0" fill="#a58aa0" opacity="0.59"/>
<circle cx="1200.6" cy="202.1" r="0.6" fill="#9d8fb0" opacity="0.55"/>
<circle cx="1222.5" cy="182.9" r="1.1" fill="#c4a08c" opacity="0.69"/>
<circle cx="1188.9" cy="196.4" r="0.9" fill="#a58e98" opacity="0.75"/>
<circle cx="1194.2" cy="196.7" r="1.0" fill="#9d8fb0" opacity="0.67"/>
<circle cx="1236.9" cy="199.2" r="1.2" fill="#c4a08c" opacity="0.73"/>
<circle cx="1223.8" cy="191.3" r="1.2" fill="#c4a08c" opacity="0.64"/>
<circle cx="1228.5" cy="194.8" r="0.5" fill="#c8a890" opacity="0.57"/>
<circle cx="1222.7" cy="195.4" r="1.1" fill="#c8a890" opacity="0.59"/>
<circle cx="1247.0" cy="191.1" r="0.8" fill="#b09aa4" opacity="0.50"/>
<circle cx="1187.9" cy="199.5" r="0.7" fill="#a58aa0" opacity="0.82"/>
<circle cx="1217.3" cy="194.8" r="0.6" fill="#a58aa0" opacity="0.67"/>
<circle cx="1243.2" cy="205.7" r="0.7" fill="#a58aa0" opacity="0.84"/>
<circle cx="1229.7" cy="184.5" r="0.8" fill="#a58e98" opacity="0.51"/>
<circle cx="1195.8" cy="199.7" r="0.9" fill="#b09aa4" opacity="0.52"/>
<circle cx="1202.9" cy="204.8" r="0.6" fill="#b09aa4" opacity="0.60"/>
<circle cx="1221.9" cy="210.7" r="0.9" fill="#b09aa4" opacity="0.71"/>
<circle cx="1233.6" cy="195.4" r="0.9" fill="#9d8fb0" opacity="0.76"/>
<circle cx="1242.6" cy="201.4" r="0.8" fill="#b89a94" opacity="0.64"/>
<circle cx="1210.8" cy="191.4" r="0.7" fill="#a58e98" opacity="0.63"/>
<circle cx="1191.4" cy="196.0" r="1.0" fill="#b09aa4" opacity="0.49"/>
<circle cx="1208.4" cy="196.8" r="0.5" fill="#9d8fb0" opacity="0.53"/>
<circle cx="1209.2" cy="185.7" r="1.0" fill="#a58aa0" opacity="0.50"/>
<circle cx="1240.9" cy="184.1" r="1.3" fill="#a58aa0" opacity="0.64"/>
<circle cx="1204.9" cy="207.2" r="1.1" fill="#a58aa0" opacity="0.78"/>
<circle cx="1194.8" cy="209.5" r="0.5" fill="#b09aa4" opacity="0.59"/>
<circle cx="1230.2" cy="210.6" r="0.7" fill="#c8a890" opacity="0.80"/>
<circle cx="1230.6" cy="192.1" r="0.7" fill="#c4a08c" opacity="0.81"/>
<circle cx="1207.8" cy="200.7" r="0.9" fill="#c8a890" opacity="0.54"/>
<circle cx="1238.4" cy="208.8" r="1.3" fill="#9d8fb0" opacity="0.53"/>
<circle cx="1200.0" cy="187.3" r="0.7" fill="#a58aa0" opacity="0.59"/>
<circle cx="1185.9" cy="207.4" r="0.5" fill="#c4a08c" opacity="0.64"/>
<circle cx="1197.0" cy="193.2" r="1.1" fill="#c8a890" opacity="0.85"/>
<circle cx="1248.0" cy="194.5" r="0.8" fill="#a58e98" opacity="0.49"/>
<circle cx="1215.5" cy="194.2" r="1.3" fill="#b09aa4" opacity="0.79"/>
<circle cx="1216.1" cy="206.8" r="1.0" fill="#9d8fb0" opacity="0.71"/>
<circle cx="1239.9" cy="204.8" r="1.1" fill="#a58e98" opacity="0.64"/>
<circle cx="1196.0" cy="204.4" r="1.1" fill="#c4a08c" opacity="0.48"/>
<circle cx="1247.4" cy="197.4" r="1.1" fill="#b89a94" opacity="0.74"/>
<circle cx="1195.4" cy="190.2" r="0.6" fill="#a58e98" opacity="0.69"/>
<circle cx="1215.2" cy="192.9" r="1.0" fill="#a58aa0" opacity="0.71"/>
<circle cx="1207.5" cy="189.9" r="0.9" fill="#a58e98" opacity="0.46"/>
<circle cx="1237.6" cy="198.4" r="1.1" fill="#a58e98" opacity="0.62"/>
<circle cx="1242.4" cy="195.3" r="1.2" fill="#a58e98" opacity="0.46"/>
<circle cx="1198.3" cy="185.4" r="0.8" fill="#b09aa4" opacity="0.62"/>
<circle cx="1192.8" cy="198.9" r="1.2" fill="#c4a08c" opacity="0.81"/>
<circle cx="1228.4" cy="202.8" r="1.2" fill="#b09aa4" opacity="0.50"/>
<circle cx="1194.2" cy="190.1" r="0.9" fill="#9d8fb0" opacity="0.63"/>
<circle cx="1195.5" cy="199.4" r="0.9" fill="#c8a890" opacity="0.50"/>
<circle cx="1188.1" cy="194.9" r="0.9" fill="#9d8fb0" opacity="0.49"/>
<circle cx="1221.5" cy="190.0" r="0.7" fill="#c4a08c" opacity="0.47"/>
<circle cx="1190.5" cy="197.2" r="1.2" fill="#b89a94" opacity="0.63"/>
<circle cx="1225.0" cy="199.6" r="0.9" fill="#b09aa4" opacity="0.53"/>
<circle cx="1202.6" cy="184.5" r="0.9" fill="#a58e98" opacity="0.73"/>
<circle cx="1242.7" cy="198.3" r="1.3" fill="#c4a08c" opacity="0.82"/>
<circle cx="1243.8" cy="201.6" r="0.8" fill="#a58aa0" opacity="0.63"/>
<circle cx="1188.9" cy="207.3" r="0.7" fill="#b89a94" opacity="0.54"/>
<circle cx="1204.3" cy="209.0" r="1.3" fill="#c8a890" opacity="0.71"/>
<circle cx="1193.6" cy="208.6" r="1.2" fill="#a58aa0" opacity="0.54"/>
<circle cx="1247.8" cy="191.6" r="1.3" fill="#9d8fb0" opacity="0.54"/>
<circle cx="1231.3" cy="204.5" r="1.3" fill="#a58aa0" opacity="0.59"/>
<circle cx="1197.1" cy="193.7" r="0.5" fill="#b09aa4" opacity="0.63"/>
<circle cx="1231.1" cy="210.6" r="0.8" fill="#b09aa4" opacity="0.70"/>
<circle cx="1236.8" cy="208.1" r="1.3" fill="#b89a94" opacity="0.48"/>
<circle cx="1202.2" cy="203.2" r="1.1" fill="#9d8fb0" opacity="0.62"/>
<circle cx="1245.1" cy="196.2" r="1.2" fill="#c4a08c" opacity="0.61"/>
<circle cx="1220.0" cy="189.7" r="0.8" fill="#c4a08c" opacity="0.47"/>
<circle cx="1230.1" cy="198.1" r="0.8" fill="#b89a94" opacity="0.56"/>
<circle cx="1185.1" cy="204.3" r="1.0" fill="#a58e98" opacity="0.48"/>
<circle cx="1241.8" cy="202.3" r="0.9" fill="#c4a08c" opacity="0.85"/>
<circle cx="1212.0" cy="208.6" r="0.5" fill="#c8a890" opacity="0.55"/>
<circle cx="1191.3" cy="193.3" r="0.6" fill="#b89a94" opacity="0.52"/>
<circle cx="1246.5" cy="192.2" r="0.7" fill="#a58aa0" opacity="0.65"/>
<circle cx="1195.9" cy="191.9" r="0.8" fill="#b89a94" opacity="0.85"/>
<circle cx="1186.5" cy="208.4" r="1.3" fill="#b09aa4" opacity="0.64"/>
<circle cx="1246.6" cy="200.1" r="0.6" fill="#9d8fb0" opacity="0.71"/>
<circle cx="1228.0" cy="182.9" r="1.3" fill="#c4a08c" opacity="0.73"/>
<circle cx="1249.8" cy="194.2" r="0.8" fill="#9d8fb0" opacity="0.80"/>
<circle cx="1240.1" cy="210.2" r="1.2" fill="#a58aa0" opacity="0.52"/>
<circle cx="1189.7" cy="200.0" r="1.2" fill="#9d8fb0" opacity="0.65"/>
<circle cx="1249.1" cy="189.0" r="0.5" fill="#a58e98" opacity="0.51"/>
<circle cx="1213.9" cy="191.9" r="0.7" fill="#c4a08c" opacity="0.84"/>
<circle cx="1220.7" cy="199.7" r="0.7" fill="#c4a08c" opacity="0.52"/>
<circle cx="1189.6" cy="196.9" r="0.7" fill="#9d8fb0" opacity="0.45"/>
<circle cx="1201.7" cy="210.5" r="0.6" fill="#a58aa0" opacity="0.68"/>
<circle cx="1210.4" cy="195.5" r="0.6" fill="#b09aa4" opacity="0.79"/>
<circle cx="1194.4" cy="209.7" r="1.2" fill="#9d8fb0" opacity="0.80"/>
<circle cx="1210.1" cy="188.3" r="0.6" fill="#c8a890" opacity="0.70"/>
<circle cx="1239.3" cy="196.9" r="0.8" fill="#c8a890" opacity="0.77"/>
<circle cx="1193.3" cy="189.6" r="0.9" fill="#b09aa4" opacity="0.68"/>
<circle cx="1238.5" cy="211.1" r="1.1" fill="#c8a890" opacity="0.72"/>
<circle cx="1230.5" cy="200.2" r="0.7" fill="#b89a94" opacity="0.47"/>
<circle cx="1226.7" cy="206.5" r="0.9" fill="#b89a94" opacity="0.70"/>
<circle cx="1226.0" cy="197.0" r="1.0" fill="#a58aa0" opacity="0.56"/>
<circle cx="1244.2" cy="206.9" r="0.6" fill="#b09aa4" opacity="0.48"/>
<circle cx="1233.4" cy="199.0" r="0.7" fill="#c8a890" opacity="0.75"/>
<circle cx="1199.5" cy="202.1" r="1.0" fill="#a58aa0" opacity="0.65"/>
<circle cx="1209.6" cy="187.0" r="1.1" fill="#b09aa4" opacity="0.70"/>
<circle cx="1197.3" cy="200.6" r="1.0" fill="#c4a08c" opacity="0.55"/>
<circle cx="1233.8" cy="195.5" r="0.5" fill="#b89a94" opacity="0.64"/>
<circle cx="1249.2" cy="208.8" r="0.6" fill="#a58e98" opacity="0.72"/>
<circle cx="1203.5" cy="190.1" r="0.9" fill="#b89a94" opacity="0.85"/>
<circle cx="1220.8" cy="198.1" r="0.7" fill="#b89a94" opacity="0.82"/>
<circle cx="1185.2" cy="184.7" r="1.3" fill="#a58aa0" opacity="0.85"/>
<circle cx="1209.9" cy="202.8" r="1.2" fill="#a58e98" opacity="0.48"/>
<circle cx="1190.1" cy="198.9" r="0.8" fill="#b09aa4" opacity="0.78"/>
<circle cx="1218.1" cy="192.8" r="1.2" fill="#c8a890" opacity="0.60"/>
<circle cx="1217.4" cy="204.7" r="0.6" fill="#a58aa0" opacity="0.72"/>
<circle cx="1211.2" cy="193.4" r="1.1" fill="#a58aa0" opacity="0.59"/>
<circle cx="1205.2" cy="199.3" r="1.1" fill="#9d8fb0" opacity="0.61"/>
<circle cx="1247.0" cy="198.6" r="0.7" fill="#b89a94" opacity="0.81"/>
<circle cx="1203.4" cy="193.4" r="1.3" fill="#b09aa4" opacity="0.48"/>
<circle cx="1246.0" cy="204.7" r="1.1" fill="#9d8fb0" opacity="0.47"/>
<circle cx="1190.8" cy="202.3" r="1.2" fill="#a58e98" opacity="0.84"/>
<circle cx="1213.2" cy="193.3" r="0.8" fill="#9d8fb0" opacity="0.60"/>
<circle cx="1248.1" cy="209.9" r="1.0" fill="#b09aa4" opacity="0.67"/>
<circle cx="1232.2" cy="189.3" r="0.5" fill="#c8a890" opacity="0.61"/>
<circle cx="1225.2" cy="209.4" r="0.9" fill="#b09aa4" opacity="0.50"/>
<circle cx="1215.6" cy="211.3" r="0.8" fill="#c4a08c" opacity="0.55"/>
<circle cx="1233.5" cy="194.3" r="0.7" fill="#a58aa0" opacity="0.67"/>
<circle cx="1210.4" cy="192.3" r="0.6" fill="#a58e98" opacity="0.48"/>
<circle cx="1217.5" cy="202.8" r="0.9" fill="#c4a08c" opacity="0.85"/>
<circle cx="1214.1" cy="189.6" r="0.6" fill="#a58e98" opacity="0.55"/>
<circle cx="1195.7" cy="192.4" r="0.8" fill="#9d8fb0" opacity="0.68"/>
<circle cx="1243.4" cy="196.6" r="1.1" fill="#a58aa0" opacity="0.60"/>
<circle cx="1234.0" cy="200.6" r="1.1" fill="#a58aa0" opacity="0.56"/>
<circle cx="1248.8" cy="205.2" r="0.6" fill="#b09aa4" opacity="0.66"/>
<circle cx="1237.0" cy="201.0" r="1.2" fill="#a58aa0" opacity="0.61"/>
<circle cx="1213.9" cy="196.1" r="1.3" fill="#9d8fb0" opacity="0.78"/>
<circle cx="1248.9" cy="204.9" r="1.1" fill="#9d8fb0" opacity="0.64"/>
<circle cx="1223.3" cy="205.0" r="0.5" fill="#a58aa0" opacity="0.82"/>
<circle cx="1246.2" cy="190.1" r="0.9" fill="#9d8fb0" opacity="0.49"/>
<circle cx="1194.3" cy="197.4" r="0.9" fill="#c8a890" opacity="0.49"/>
<circle cx="1239.3" cy="194.3" r="1.2" fill="#b89a94" opacity="0.67"/>
<circle cx="1186.6" cy="184.2" r="1.1" fill="#a58e98" opacity="0.68"/>
<circle cx="1186.5" cy="194.5" r="1.0" fill="#b09aa4" opacity="0.70"/>
<circle cx="1230.8" cy="179.0" r="0.6" fill="#b89a94" opacity="0.57"/>
<circle cx="1247.2" cy="201.2" r="1.1" fill="#b89a94" opacity="0.45"/>
<circle cx="1204.2" cy="204.8" r="0.9" fill="#c4a08c" opacity="0.71"/>
<circle cx="1243.2" cy="193.2" r="0.7" fill="#a58aa0" opacity="0.73"/>
<circle cx="1204.6" cy="199.9" r="0.5" fill="#a58aa0" opacity="0.80"/>
<circle cx="1227.4" cy="204.0" r="0.8" fill="#c4a08c" opacity="0.54"/>
<circle cx="1186.3" cy="201.8" r="0.8" fill="#a58aa0" opacity="0.59"/>
<circle cx="1210.6" cy="205.6" r="1.2" fill="#b89a94" opacity="0.53"/>
<circle cx="1249.0" cy="199.3" r="0.7" fill="#9d8fb0" opacity="0.53"/>
<circle cx="1215.2" cy="197.4" r="0.6" fill="#b09aa4" opacity="0.65"/>
<circle cx="1199.0" cy="188.7" r="1.3" fill="#a58e98" opacity="0.82"/>
<circle cx="1187.6" cy="204.9" r="0.5" fill="#b09aa4" opacity="0.51"/>
<circle cx="1187.5" cy="206.4" r="1.2" fill="#c4a08c" opacity="0.74"/>
<circle cx="1250.8" cy="202.0" r="1.2" fill="#c4a08c" opacity="0.53"/>
<circle cx="1227.7" cy="190.1" r="0.7" fill="#c8a890" opacity="0.60"/>
<circle cx="1209.1" cy="197.6" r="0.8" fill="#a58e98" opacity="0.49"/>
<circle cx="1189.2" cy="206.3" r="1.2" fill="#b09aa4" opacity="0.84"/>
<circle cx="1197.9" cy="203.1" r="0.8" fill="#9d8fb0" opacity="0.57"/>
<circle cx="1237.9" cy="159.9" r="1.2" fill="#6f8fd0" opacity="0.5"/>
<circle cx="1197.1" cy="169.9" r="1.0" fill="#6f8fd0" opacity="0.5"/>
<circle cx="1205.7" cy="174.2" r="1.0" fill="#6f8fd0" opacity="0.5"/>
<circle cx="1226.3" cy="163.5" r="1.1" fill="#6f8fd0" opacity="0.5"/>
<circle cx="1211.1" cy="166.3" r="1.0" fill="#6f8fd0" opacity="0.5"/>
<circle cx="1237.8" cy="159.4" r="0.8" fill="#6f8fd0" opacity="0.5"/>
<circle cx="1188.2" cy="171.3" r="0.9" fill="#6f8fd0" opacity="0.5"/>
<circle cx="1206.4" cy="179.0" r="0.6" fill="#6f8fd0" opacity="0.5"/>
<circle cx="1234.0" cy="173.2" r="1.3" fill="#6f8fd0" opacity="0.5"/>
<circle cx="1203.9" cy="173.9" r="1.1" fill="#6f8fd0" opacity="0.5"/>
<circle cx="1238.0" cy="178.8" r="0.7" fill="#6f8fd0" opacity="0.5"/>
<circle cx="1239.3" cy="160.4" r="1.2" fill="#6f8fd0" opacity="0.5"/>
<circle cx="1215.2" cy="175.1" r="1.2" fill="#6f8fd0" opacity="0.5"/>
<circle cx="1245.2" cy="175.9" r="0.7" fill="#6f8fd0" opacity="0.5"/>
<circle cx="1217.3" cy="158.2" r="1.3" fill="#6f8fd0" opacity="0.5"/>
<circle cx="1204.3" cy="173.2" r="0.7" fill="#6f8fd0" opacity="0.5"/>
<circle cx="1199.8" cy="176.9" r="1.0" fill="#6f8fd0" opacity="0.5"/>
<circle cx="1236.5" cy="171.1" r="1.0" fill="#6f8fd0" opacity="0.5"/>
<circle cx="1210.2" cy="161.5" r="0.9" fill="#6f8fd0" opacity="0.5"/>
<circle cx="1227.5" cy="168.6" r="1.0" fill="#6f8fd0" opacity="0.5"/>
<circle cx="1194.8" cy="167.4" r="0.7" fill="#6f8fd0" opacity="0.5"/>
<circle cx="1188.8" cy="171.7" r="0.8" fill="#6f8fd0" opacity="0.5"/>
<circle cx="1212.2" cy="179.7" r="1.4" fill="#6f8fd0" opacity="0.5"/>
<circle cx="1195.6" cy="160.9" r="1.0" fill="#6f8fd0" opacity="0.5"/>
<circle cx="1243.7" cy="163.2" r="1.0" fill="#6f8fd0" opacity="0.5"/>
<path d="M1184 181 C1187 182 1188.500 184 1189 187.500 L1201 189.500 L1201 191.500 L1188 191 L1187 200 L1184 201 Z" fill="#5590dc"/>
<circle cx="1186.800" cy="177" r="2.600" fill="#9a4a3a"/><circle cx="1186" cy="179.500" r="1.800" fill="#e8c4ae"/>
<path d="M1208 170.500 C1207.500 167 1210 165.300 1213 165.300 C1215.500 165 1216.800 166 1216 167.300 L1213.500 168.300 L1213 172 L1210 172.500 Z" fill="#2f4f88"/>
<path d="M1212.500 168 C1214.500 167.500 1216 168.500 1215.800 170.500 L1215.500 173.500 C1214.500 174.800 1212.500 174.500 1211.800 173.500 Z" fill="#e9c8b4"/>
<path d="M1209.500 175.500 C1212 174 1215 174.500 1216 177 L1217.500 194.500 L1209 195.500 C1207.500 189 1207.800 181 1209.500 175.500 Z" fill="#a3b7da"/>
<path d="M1213.500 175.500 L1203.500 191" stroke="#35507f" stroke-width="0.900" fill="none"/>
<path d="M1201.500 190 C1204 188.500 1208 189 1209 192 L1208.500 197.500 C1206 198.500 1203 198 1202 196 Z" fill="#40598a"/>
<path d="M1209.300 195.300 L1217.500 194.300 L1217 205 L1213.500 205.300 L1212.800 201 L1211.500 205.500 L1209 205 Z" fill="#a0705f"/>
<path d="M1210 205 L1204.500 211.500 L1206 212.800 L1212 205.500 Z M1214 205.300 L1213.500 216.500 L1215.300 216.500 L1216.500 205.300 Z" fill="#e9c8b4"/>
<path d="M1203 210 L1205.500 212 L1204.500 214.500 L1202.500 213 Z M1212.500 215.500 H1217 V217.300 H1212.500 Z" fill="#2b3556"/>
<path d="M1199.800 211.800 L1205 217.800 M1211 219.300 L1219.500 218.300" stroke="#e4e8f2" stroke-width="0.900" fill="none"/>
</g>
<!-- name label -->
<rect x="1123" y="244" width="70" height="24" fill="#15171a"/>
<rect x="1099" y="244" width="24" height="24" fill="#ff7f1a"/>
<circle cx="1110.800" cy="252.500" r="3.500" fill="#fff"/>
<path d="M1104 264.500 C1104 258.500 1107.500 257 1108.800 257 L1110.800 259 L1112.800 257 C1114.100 257 1117.600 258.500 1117.600 264.500 Z" fill="#fff"/>
<rect x="1129" y="248.500" width="6" height="11" rx="3" fill="#fff"/>
<path d="M1129 255 H1135 V256.500 A3 3 0 0 1 1129 256.500 Z" fill="#3de23d"/>
<path d="M1126.800 255.500 A5.200 5.200 0 0 0 1137.200 255.500 M1132 260.700 V263" fill="none" stroke="#fff" stroke-width="1.400" stroke-linecap="round"/>
</svg>
<div class="t" style="left:45px;top:11.600px;color:#fff;font-size:12.300px;line-height:16px;letter-spacing:-0.150px">正在讲话: 宋宇航;</div>
<div class="t" style="left:45.500px;top:149px;color:#fff;font-size:16.400px;line-height:22px;letter-spacing:0">宋宇航</div>
</div>
<!-- right edge line + audio meter -->
<div class="abs" style="left:1364px;top:29px;width:1.300px;height:769px;background:#1d1d1d"></div>
<div class="abs" style="left:1365.300px;top:29px;width:1px;height:769px;background:#fafafa"></div>
<div class="abs" style="left:1356px;top:181px;width:8.500px;height:45px;border-radius:4px;background:#f2f2f4;border:1.200px solid #6b6c70"></div>
<div class="abs" style="left:1358.300px;top:199px;width:4px;height:24.500px;border-radius:2px;background:#f07f2a"></div>


</body>
</html>
